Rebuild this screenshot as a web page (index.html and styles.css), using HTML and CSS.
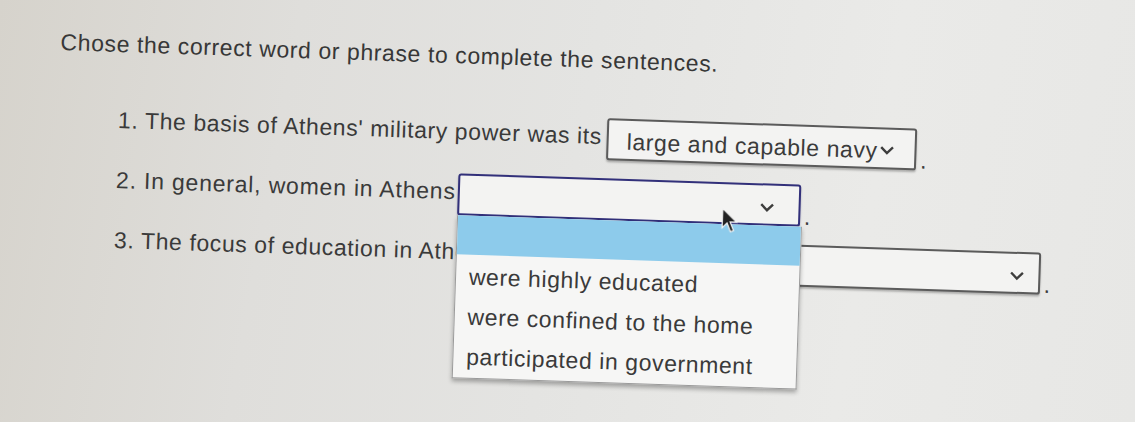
FILE: index.html
```html
<!DOCTYPE html>
<html lang="en">
<head>
    <meta charset="UTF-8">
    <meta name="viewport" content="width=device-width, initial-scale=1.0">
    <title>Athens - Sentence Completion</title>
    <link rel="stylesheet" href="styles.css">
</head>
<body>
    <div class="sheet">
        <!-- Instructions -->
        <p class="prompt">Chose the correct word or phrase to complete the sentences.</p>

        <!-- Questions -->
        <div class="questions">
            <div class="question">
                <span class="label">1. The basis of Athens' military power was its</span>
                <div class="select select-filled">
                    <span class="value">large and capable navy</span>
                    <svg class="chevron" viewBox="0 0 14 9"><path d="M1.5 1.5 L7 7 L12.5 1.5"/></svg>
                </div>
                <span class="stop">.</span>
            </div>

            <div class="question">
                <span class="label label-wide">2. In general, women in Athens</span>
                <div class="select select-open">
                    <span class="value"></span>
                    <svg class="chevron" viewBox="0 0 14 9"><path d="M1.5 1.5 L7 7 L12.5 1.5"/></svg>

                    <!-- Open option list -->
                    <ul class="options">
                        <li class="active"></li>
                        <li>were highly educated</li>
                        <li>were confined to the home</li>
                        <li>participated in government</li>
                    </ul>

                    <svg class="pointer" viewBox="0 0 14 22">
                        <path d="M1 1 L1 17 L5 13 L8 20 L10.5 19 L7.5 12 L13 12 Z"/>
                    </svg>
                </div>
                <span class="stop">.</span>
            </div>

            <div class="question">
                <span class="label">3. The focus of education in Athens was</span>
                <div class="select select-wide">
                    <span class="value"></span>
                    <svg class="chevron" viewBox="0 0 14 9"><path d="M1.5 1.5 L7 7 L12.5 1.5"/></svg>
                </div>
                <span class="stop">.</span>
            </div>
        </div>
    </div>
</body>
</html>
```

FILE: styles.css
```css
/* Base */
* {
    margin: 0;
    padding: 0;
    box-sizing: border-box;
}

body {
    font-family: 'Liberation Sans', Arial, sans-serif;
    color: #3a3a3a;
    background: linear-gradient(100deg, #d6d3cc 0%, #dfdedb 25%, #e4e4e2 50%, #eaeae8 75%, #e7e7e5 100%);
    width: 1135px;
    height: 422px;
    overflow: hidden;
}

/* Worksheet, sits a little crooked on the screen */
.sheet {
    padding: 26px 0 0 62px;
    transform: rotate(1.9deg);
    transform-origin: 0 0;
}

.prompt {
    font-size: 23px;
    line-height: 28px;
    letter-spacing: 0.6px;
    color: #373737;
}

/* Question rows */
.questions {
    display: flex;
    flex-direction: column;
    gap: 18px;
    margin: 44px 0 0 60px;
}

.question {
    display: flex;
    align-items: center;
    height: 42px;
    font-size: 23px;
    letter-spacing: 0.6px;
}

.label {
    white-space: nowrap;
    margin-top: -6px;
}

.label-wide {
    letter-spacing: 0.8px;
}

.stop {
    align-self: flex-end;
    margin-left: 4px;
    line-height: 20px;
}

/* Dropdowns */
.select {
    position: relative;
    display: flex;
    align-items: center;
    height: 42px;
    margin-left: 5px;
    padding: 0 18px;
    background: #f3f3f2;
    border: 2px solid #5b5b5b;
    border-radius: 3px;
    box-shadow: 0 2px 2px rgba(0, 0, 0, 0.25);
}

.select-filled {
    width: 310px;
    padding-right: 20px;
}

.select-open {
    width: 343px;
    margin-left: 2px;
    border-color: #32307a;
    box-shadow: 0 2px 2px rgba(30, 30, 90, 0.35);
}

.select-wide {
    width: 492px;
}

.value {
    flex: 1;
    white-space: nowrap;
    color: #3b3b3b;
    padding-top: 4px;
}

.chevron {
    width: 15px;
    height: 10px;
    margin-top: 6px;
    flex: none;
}

.chevron path {
    fill: none;
    stroke: #3d3d3d;
    stroke-width: 2.2;
}

.select-filled .chevron {
    position: absolute;
    right: 20px;
    top: 16px;
    margin: 0;
}

.select-open .chevron {
    margin-right: 6px;
}

.select-wide .chevron {
    margin-right: -4px;
}

/* Option list under the open dropdown */
.options {
    position: absolute;
    top: 40px;
    left: -2px;
    width: 345px;
    list-style: none;
    background: #f6f6f5;
    border: 1px solid #9a9a9a;
    border-top: none;
    box-shadow: 0 3px 4px rgba(0, 0, 0, 0.3);
    z-index: 5;
}

.options li {
    height: 40px;
    line-height: 44px;
    padding-left: 13px;
    color: #3a3a3a;
    white-space: nowrap;
}

.options li.active {
    height: 39px;
    background: #8dcbeb;
}

.options li:last-child {
    height: 43px;
}

/* Mouse pointer */
.pointer {
    position: absolute;
    left: 262px;
    top: 23px;
    width: 17px;
    height: 27px;
    z-index: 6;
    filter: blur(0.6px);
}

.pointer path {
    fill: #222;
    stroke: #f4f4f4;
    stroke-width: 1;
}
```
